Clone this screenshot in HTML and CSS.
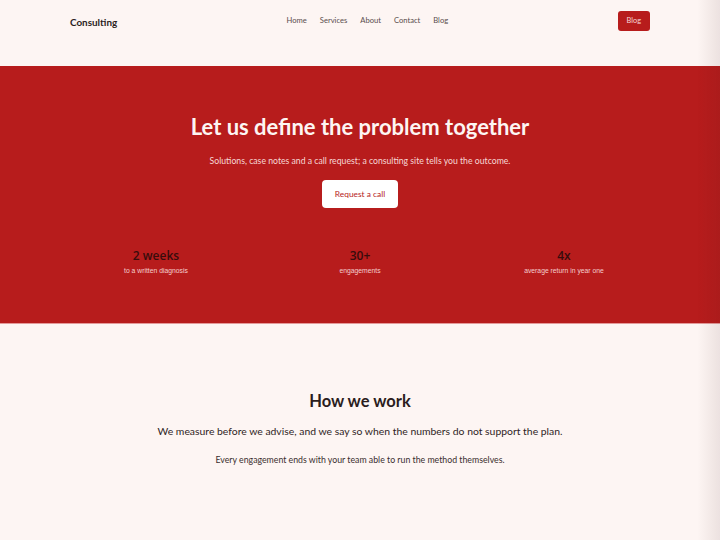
FILE: index.html
```html
<!DOCTYPE html>
<html lang="en">
<head>
<meta charset="utf-8">
<title>Consulting</title>
<link rel="stylesheet" href="styles.css">
</head>
<body>
<header class="site-header">
  <div class="container nav-row">
    <a class="logo" href="#">Consulting</a>
    <nav class="nav-links">
      <a href="#">Home</a>
      <a href="#">Services</a>
      <a href="#">About</a>
      <a href="#">Contact</a>
      <a href="#">Blog</a>
    </nav>
    <a class="nav-btn" href="#">Blog</a>
  </div>
</header>
<section class="hero">
  <div class="container hero-inner">
    <h1 class="hero-title">Let us define the problem together</h1>
    <p class="hero-sub">Solutions, case notes and a call request; a consulting site tells you the outcome.</p>
    <a class="hero-btn" href="#">Request a call</a>
    <div class="stats">
      <div class="stat"><div class="stat-value">2 weeks</div><div class="stat-label">to a written diagnosis</div></div>
      <div class="stat"><div class="stat-value">30+</div><div class="stat-label">engagements</div></div>
      <div class="stat"><div class="stat-value">4x</div><div class="stat-label">average return in year one</div></div>
    </div>
  </div>
</section>
<section class="how">
  <div class="container how-inner">
    <h2 class="how-title">How we work</h2>
    <p class="how-lead">We measure before we advise, and we say so when the numbers do not support the plan.</p>
    <p class="how-note">Every engagement ends with your team able to run the method themselves.</p>
  </div>
</section>
<div class="edge-shade"></div>
</body>
</html>
```
FILE: styles.css
```css
* { box-sizing: border-box; }
html, body { margin: 0; padding: 0; }
body {
  background: #fdf5f3;
  font-family: "Lato", "Noto Sans", sans-serif;
  color: #2b1d1d;
  min-height: 540px;
}
a { text-decoration: none; }
.container {
  width: 580px;
  margin: 0 auto;
}
.site-header {
  padding: 11px 0 0;
  height: 66px;
}
.nav-row {
  display: flex;
  align-items: center;
  justify-content: space-between;
  height: 20px;
}
.logo {
  font-weight: 700;
  font-size: 9.9px;
  color: #2b1d1d;
  margin-top: 1px;
}
.nav-links {
  display: flex;
  gap: 13px;
  margin-top: -2px;
}
.nav-links a {
  font-size: 7.6px;
  color: #5a4d4d;
}
.nav-btn {
  background: #b71c1c;
  color: #f5d6d6;
  font-size: 7.4px;
  height: 20px;
  line-height: 20px;
  padding: 0 9px;
  border-radius: 3px;
}
.hero {
  background: #b71c1c;
  border-bottom: 1px solid #e49a9a;
}
.hero-inner {
  display: flex;
  flex-direction: column;
  align-items: center;
  padding: 46px 0 48px;
}
.hero-title {
  margin: 0;
  font-size: 22px;
  line-height: 30px;
  font-weight: 700;
  color: #fdf5f3;
}
.hero-sub {
  margin: 13px 0 0;
  font-size: 8.7px;
  line-height: 12px;
  color: #f6d7d5;
}
.hero-btn {
  margin-top: 13px;
  background: #ffffff;
  color: #b71c1c;
  font-size: 8.4px;
  height: 28px;
  line-height: 28px;
  padding: 0 13px;
  border-radius: 4px;
}
.stats {
  width: 100%;
  display: grid;
  grid-template-columns: repeat(3, 1fr);
  column-gap: 32px;
  margin-top: 40px;
}
.stat {
  display: flex;
  flex-direction: column;
  align-items: center;
  font-family: "Open Sans", "Noto Sans", sans-serif;
}
.stat-value {
  font-size: 12px;
  line-height: 16px;
  font-weight: 600;
  color: #380c0c;
}
.stat-label {
  font-size: 6.8px;
  line-height: 9px;
  margin-top: 2px;
  color: #f4cdcd;
  font-family: "Liberation Sans", Arial, sans-serif;
}
.how-inner {
  display: flex;
  flex-direction: column;
  align-items: center;
  padding: 66px 0 60px;
}
.how-title {
  margin: 0;
  font-size: 16.5px;
  line-height: 22px;
  font-weight: 700;
  color: #2b1d1d;
}
.how-lead {
  margin: 12px 0 0;
  font-size: 10.4px;
  line-height: 14px;
  color: #2f2424;
}
.how-note {
  margin: 16px 0 0;
  font-size: 8.75px;
  line-height: 12px;
  color: #3a2e2e;
}
.edge-shade {
  position: fixed;
  top: 0;
  right: 0;
  width: 22px;
  height: 100%;
  pointer-events: none;
  background: linear-gradient(to right, rgba(0,0,0,0), rgba(60,30,30,0.09));
}
```
